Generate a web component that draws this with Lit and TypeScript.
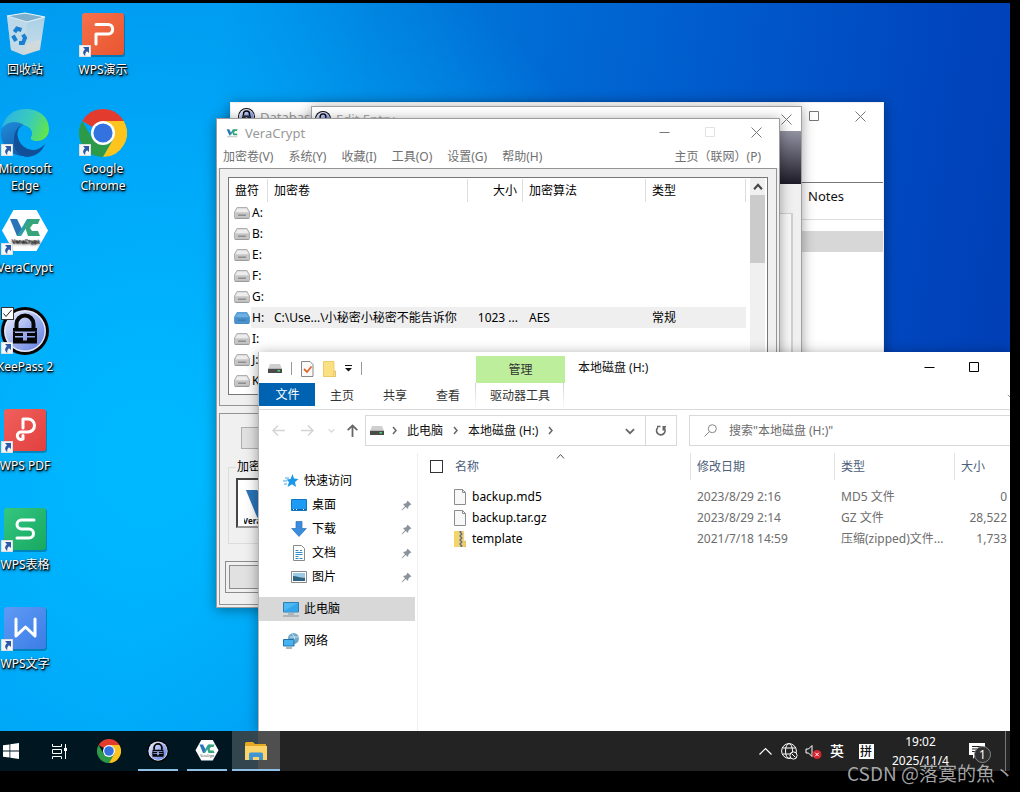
import { LitElement, html, css, svg, nothing } from "lit";
import { customElement, property } from "lit/decorators.js";
import { classMap } from "lit/directives/class-map.js";

const base = css`
  * { box-sizing: border-box; }
  button { font: inherit; color: inherit; background: none; border: 0; padding: 0; margin: 0; }
  a { color: inherit; text-decoration: none; }
  svg { display: block; flex: none; }
  table { border-collapse: collapse; table-layout: fixed; }
  th, td { padding: 0; font-weight: 400; text-align: left; white-space: nowrap; overflow: hidden; }
`;

/* ---------- icons ---------- */

const wpsTile = (id: string, from: string, to: string, glyph: unknown) => html`
  <svg width="48" height="48" viewBox="0 0 48 48">
    <defs><linearGradient id=${id} x1="0" y1="0" x2="1" y2="1"><stop offset="0" stop-color=${from}/><stop offset="1" stop-color=${to}/></linearGradient></defs>
    <rect x="3" y="4" width="43" height="43" rx="3" fill="#000" opacity=".25"/>
    <rect x="3" y="3" width="42" height="42" rx="3" fill="url(#${id})"/>
    <g fill="none" stroke="#fff" stroke-width="3" stroke-linecap="round" stroke-linejoin="round">${glyph}</g>
  </svg>`;

const chrome = (s: number) => html`
  <svg width=${s} height=${s} viewBox="0 0 48 48">
    <path d="M24 24 3.2 12A24 24 0 0 1 44.8 12L24 12Z" fill="#e33b2e"/>
    <path d="M3.2 12A24 24 0 0 0 24 48L34.4 30 24 24 13.6 30Z" fill="#2c9a48"/>
    <path d="M44.8 12A24 24 0 0 1 24 48L34.4 30 34 17 24 12Z" fill="#fcc41c"/>
    <circle cx="24" cy="24" r="12" fill="#fff"/>
    <circle cx="24" cy="24" r="9.6" fill="#3472e0"/>
  </svg>`;

const keepass = (s: number, id = "kp") => html`
  <svg width=${s} height=${s} viewBox="0 0 48 48">
    <defs><linearGradient id=${id} x1="0" y1="0" x2="1" y2="1"><stop offset="0" stop-color="#f4f6ff"/><stop offset=".5" stop-color="#9fb0ee"/><stop offset="1" stop-color="#5f7ddd"/></linearGradient></defs>
    <circle cx="24" cy="24" r="24" fill="#060606"/>
    <circle cx="24" cy="24" r="21" fill="#e4e9fb"/>
    <circle cx="24" cy="24" r="19.5" fill="url(#${id})"/>
    <path d="M15.5 21v-4a8.500 8.500 0 0 1 17 0v4" fill="none" stroke="#060606" stroke-width="4"/>
    <path d="M12 21h24v3.500H12zM12 26h10v3H12zM26 26h10v3H26zM12 30.500h10v3H12zM26 30.500h10v3H26zM12 33.500h24v3H12z" fill="#060606"/>
    <path d="M12 24.500h2v9h-2zM34 24.500h2v9h-2z" fill="#060606"/>
  </svg>`;

const vcMark = svg`
  <path d="M9 11h7l6 12-3 5h-3z" fill="#2a74b8"/>
  <path d="M16 28 26 11h5L20 28z" fill="#2b9fa5"/>
  <path d="M39 11H29l-5 8 3 9h12l-2-5h-6l-2-3 3-4h5z" fill="#36a579"/>`;

const veracrypt = (s: number) => html`
  <svg width=${s} height=${s} viewBox="0 0 48 48">
    <path d="M12.500 2h23L47 22.500 35.500 43h-23L1 22.500Z" fill="#fff"/>
    ${vcMark}
    <text x="24.500" y="35" text-anchor="middle" font-family="Open Sans, sans-serif" font-size="6" fill="#222">VeraCrypt</text>
  </svg>`;

const edge = html`
  <svg width="48" height="48" viewBox="0 0 48 48">
    <defs>
      <linearGradient id="e1" x1="0" y1=".3" x2="1" y2=".6"><stop offset="0" stop-color="#2cb3e4"/><stop offset=".55" stop-color="#3accba"/><stop offset="1" stop-color="#62e44a"/></linearGradient>
      <linearGradient id="e2" x1="0" y1="0" x2=".6" y2="1"><stop offset="0" stop-color="#1f8fdc"/><stop offset="1" stop-color="#1257a9"/></linearGradient>
    </defs>
    <path d="M1 19C4 6 13 0 25 0c14 0 23 9 23 20 0 8-6 12-12 12-5 0-7-2-6-4 3-4 0-11-8-12C13 15 5 17 1 19Z" fill="url(#e1)"/>
    <path d="M1 19c5-7 15-8 22-3-7 1-9 9-6 17 3 8 10 12 18 11C22 52 0 44 0 24c0-2 .3-3.500 1-5Z" fill="url(#e2)"/>
    <path d="M22 16c-7 3-7 12-2 19 6 7 16 9 24 0-3 8-10 13-19 13-8-2-13-8-12-17 0-8 3-13 9-15Z" fill="#114f99"/>
  </svg>`;

const recycle = html`
  <svg width="48" height="48" viewBox="0 0 48 48">
    <defs><linearGradient id="rb" x1="0" y1="0" x2="0" y2="1"><stop offset="0" stop-color="#a6cfe6"/><stop offset=".7" stop-color="#bfd9e8"/><stop offset="1" stop-color="#cfcfca"/></linearGradient></defs>
    <path d="M6 6 24 3l20 4-5 33-17 5-12-5Z" fill="url(#rb)"/>
    <path d="M6 6 24 3l20 4-18 5Z" fill="#7db0cd" stroke="#e6f2f8" stroke-width="1.200"/>
    <path d="m26 12-2 33-14-5L6 6Z" fill="#c2dbe9" opacity=".75"/>
    <path d="m24 45 1-11 15-5-2 11Z" fill="#dddcd7" opacity=".55"/>
    <g fill="none" stroke="#1a7fd0" stroke-width="4"><path d="m13.500 22 2.500-3.500 4.500 1.500M12 25.500l3 5.500M18 33h4l2-5-2-3.500"/></g>
  </svg>`;

const shortcut = html`
  <svg class="shortcut" width="12" height="12" viewBox="0 0 12 12">
    <rect width="12" height="12" fill="#f6f6f6" stroke="#c8c8c8"/>
    <path d="M4 2h6v6L8 6.300C6.500 7.500 6 9 6.300 11 3.500 9 3.500 6.500 6 4.300Z" fill="#2a5ba8"/>
  </svg>`;

const disk = (blue = false) => html`
  <svg width="16" height="12" viewBox="0 0 16 12">
    <path d="M3 .5h10L15.500 5v5.500a1 1 0 0 1-1 1h-13a1 1 0 0 1-1-1V5Z" fill=${blue ? "#5fa3d8" : "#dcdcdc"} stroke=${blue ? "#5b9fd4" : "#b0b0b0"}/>
    <path d="M1 5.500h14v5H1z" fill=${blue ? "#4a90cb" : "#c6c6c6"}/>
    <path d="M4 7.500h8v1.500H4z" fill=${blue ? "#3b7db6" : "#8f8f8f"}/>
    <path d="M1 11.200h14" stroke=${blue ? "#3b7db6" : "#8a8a8a"} stroke-width=".8"/>
    <path d="M3.500 2h9L14 5H2Z" fill=${blue ? "#6db1e4" : "#ededed"}/>
  </svg>`;

const darkDisk = html`
  <svg width="14" height="9" viewBox="0 0 14 9">
    <path d="M2 0h10l2 5H0Z" fill="#cfcfcf"/><path d="M0 4.800h14V9H0z" fill="#4a4a4a"/><path d="M9.500 6h2.500v1.500H9.500z" fill="#3fe06a"/>
  </svg>`;

type Mark = "min" | "max" | "close";
const mark = (k: Mark) => html`
  <svg width="11" height="11" viewBox="0 0 11 11" fill="none" stroke="currentColor">
    ${k === "min" ? svg`<path d="M.5 5.500h10"/>` : k === "max" ? svg`<path d="M.5.5h9v9h-9z"/>` : svg`<path d="m.5.5 10 10M10.500.5l-10 10"/>`}
  </svg>`;

const chev = (d: string, size = 9, w = 1.5) => html`
  <svg width=${size} height=${size} viewBox="0 0 9 9" fill="none" stroke="currentColor" stroke-width=${w}><path d=${d}/></svg>`;
const UP = "m1 6.500 3.500-4L8 6.500", DOWN = "m.8 2.800 3.700 3.700 3.700-3.700", RIGHT = "m3 1 3 3.500L3 8";

/* ---------- desktop shortcuts ---------- */

@customElement("desktop-icon")
export class DesktopIcon extends LitElement {
  @property() label = "";
  @property({ attribute: false }) icon: unknown = nothing;
  @property({ type: Boolean }) link = false;
  @property({ type: Boolean }) ticked = false;
  static styles = [base, css`
    :host { display: block; }
    .item { display: flex; flex-direction: column; align-items: center; width: 100%; gap: 3px; color: #fff; line-height: 17px; text-shadow: 0 1px 2px #000, 1px 1px 1px #000, 1px 2px 3px rgba(0, 0, 0, .6); }
    .art { position: relative; width: 48px; height: 48px; }
    .shortcut { position: absolute; left: 0; bottom: 1px; }
    .tick { position: absolute; left: 0; top: 0; width: 13px; height: 13px; background: #fff; border: 1px solid #333; }
    .check { position: absolute; left: 2px; top: 2px; pointer-events: none; }
    .label { max-width: 62px; text-align: center; }
  `];
  render() {
    return html`<button class="item">
      <span class="art">${this.icon}${this.link ? shortcut : nothing}
        ${this.ticked ? html`<span class="tick"></span><svg class="check" width="9" height="9" viewBox="0 0 9 9" fill="none" stroke="#222"><path d="m.5 4.500 2.500 3L8.500 1"/></svg>` : nothing}
      </span>
      <span class="label">${this.label}</span>
    </button>`;
  }
}

/* ---------- KeePass windows ---------- */

@customElement("keepass-window")
export class KeepassWindow extends LitElement {
  static styles = [base, css`
    :host { display: block; background: #fff; border: 1px solid #f0f0f0; color: #9a9a9a; font-size: 13px; }
    .bar { display: flex; align-items: center; height: 27px; padding-left: 7px; }
    .name { flex: 1; padding-left: 5px; }
    .ctl { width: 46px; height: 27px; display: grid; place-items: center; color: #777; }
    .tools { height: 53px; border-bottom: 1px solid #777; }
    .entries { width: 100%; color: #111; }
    th { height: 36px; padding: 0 0 9px 577px; border-bottom: 1px solid #ddd; }
    td { height: 21px; background: #d7d7d7; }
    .gap td { height: 12px; background: none; }
  `];
  render() {
    return html`
      <div class="bar">${keepass(17, "kp1")}<span class="name">Database</span>
        <button class="ctl" aria-label="最大化">${mark("max")}</button><button class="ctl" aria-label="关闭">${mark("close")}</button></div>
      <div class="tools"></div>
      <table class="entries"><thead><tr><th>Notes</th></tr></thead>
        <tbody><tr class="gap"><td></td></tr><tr><td></td></tr></tbody></table>`;
  }
}

@customElement("entry-dialog")
export class EntryDialog extends LitElement {
  static styles = [base, css`
    :host { display: flex; flex-direction: column; background: #f0f0f0; border: 1px solid #a0a0a0; color: #aaa; font-size: 13px; }
    .bar { display: flex; align-items: center; height: 24px; padding: 0 9px 0 3px; gap: 5px; background: #fff; }
    .name { flex: 1; }
    .ctl { color: #777; }
    .banner { height: 53px; background: linear-gradient(#9392a2, #1d1b27); }
    .page { flex: 1; margin: 29px 8px 8px; background: #fafafa; border: 1px solid #d0d0d0; border-right-width: 2px; }
  `];
  render() {
    return html`<div class="bar">${keepass(16, "kp2")}<span class="name">Edit Entry</span><button class="ctl" aria-label="关闭">${mark("close")}</button></div>
      <div class="banner"></div><div class="page"></div>`;
  }
}

/* ---------- VeraCrypt ---------- */

const volumes = ["A:", "B:", "E:", "F:", "G:", "H:", "I:", "J:", "K:"].map((d) =>
  d === "H:" ? [d, "C:\\Use...\\小秘密小秘密不能告诉你", "1023 ...", "AES", "常规"] : [d, "", "", "", ""]);

@customElement("veracrypt-window")
export class VeracryptWindow extends LitElement {
  static styles = [base, css`
    :host { display: flex; flex-direction: column; background: #f0f0f0; border: 1px solid #9c9c9c; color: #000; }
    .bar { display: flex; align-items: center; height: 27px; background: #fff; padding-left: 9px; color: #999; font-size: 13px; }
    .name { flex: 1; padding-left: 7px; }
    .ctl { width: 46px; height: 27px; display: grid; place-items: center; color: #777; }
    .ctl:disabled { color: #e2e2e2; }
    .menu { display: flex; height: 22px; align-items: center; gap: 15px; padding: 0 18px 0 6px; background: #fff; color: #707070; }
    .home { margin-left: auto; }
    .panel { margin: 0 2px 7px; border: 1px solid #949494; }
    .lists { padding: 8px 8px 10px; }
    .box { display: flex; justify-content: space-between; height: 218px; background: #fff; border: 1px solid #777; padding-right: 2px; overflow: hidden; }
    table { align-self: flex-start; }
    th { height: 24px; }
    th span { display: block; height: 23px; line-height: 23px; border-right: 1px solid #ddd; padding-left: 6px; }
    td { height: 21px; line-height: 20px; padding-left: 6px; }
    th.num span, td.num { text-align: right; padding-right: 5px; }
    .drive { display: flex; align-items: center; gap: 2px; margin-left: -1px; }
    .on td { background: #efefef; }
    .on td:first-child { background: linear-gradient(90deg, #fff 22px, #efefef 22px); }
    .scroll { width: 15px; background: #f0f0f0; color: #444; }
    .scroll button { display: grid; place-items: center; width: 15px; height: 17px; }
    .thumb { height: 68px; background: #cbcbcb; }
    .actions { flex: 1; margin-bottom: 2px; }
    .grey { display: block; background: #e1e1e1; border: 1px solid #adadad; width: 110px; height: 22px; margin: 13px 0 10px 21px; }
    fieldset { height: 85px; margin: 0 8px; padding: 0 7px; border: 1px solid #dcdcdc; }
    legend { line-height: 16px; padding: 0 1px; }
    .logo { width: 70px; height: 50px; margin-top: 3px; background: #fff; border: 2px inset #999; padding: 10px 6px; }
    .default { margin: 17px 5px 0; border: 1px solid #8c8c8c; padding: 3px; height: 32px; }
    .default button { width: 120px; height: 24px; background: #e1e1e1; border: 1px solid #8c8c8c; }
  `];
  render() {
    return html`
      <div class="bar">
        <svg width="12" height="12" viewBox="7 9 33 25">${vcMark}<path d="M10 31h28v2H10z" fill="#aaa"/></svg>
        <span class="name">VeraCrypt</span>
        <button class="ctl" aria-label="最小化">${mark("min")}</button><button class="ctl" disabled aria-label="最大化">${mark("max")}</button><button class="ctl" aria-label="关闭">${mark("close")}</button>
      </div>
      <div class="menu">${["加密卷(V)", "系统(Y)", "收藏(I)", "工具(O)", "设置(G)", "帮助(H)"].map((m) => html`<button>${m}</button>`)}
        <button class="home">主页（联网）(P)</button></div>
      <div class="panel lists"><div class="box">
        <table>
          <colgroup><col width="39"><col width="200"><col width="55"><col width="123"><col width="100"></colgroup>
          <thead><tr>${["盘符", "加密卷", "大小", "加密算法", "类型"].map((h, i) => html`<th class=${i === 2 ? "num" : ""}><span>${h}</span></th>`)}</tr></thead>
          <tbody>${volumes.map((v) => html`<tr class=${classMap({ on: !!v[1] })}>
            <td><span class="drive">${disk(!!v[1])}${v[0]}</span></td><td>${v[1]}</td><td class="num">${v[2]}</td><td>${v[3]}</td><td>${v[4]}</td></tr>`)}</tbody>
        </table>
        <div class="scroll"><button aria-label="向上滚动">${chev(UP, 10, 1.8)}</button><div class="thumb"></div></div>
      </div></div>
      <div class="panel actions">
        <button class="grey" aria-label="创建加密卷"></button>
        <fieldset><legend>加密卷</legend>
          <div class="logo"><svg width="54" height="34" viewBox="8 11 33 21">${vcMark}<text x="7" y="32" font-family="Open Sans, sans-serif" font-size="5" font-weight="700" fill="#111">VeraCrypt</text></svg></div>
        </fieldset>
        <div class="default"><button aria-label="加载"></button></div>
      </div>`;
  }
}

/* ---------- File Explorer ---------- */

const files = [
  ["backup.md5", "2023/8/29 2:16", "MD5 文件", "0"],
  ["backup.tar.gz", "2023/8/29 2:14", "GZ 文件", "28,522"],
  ["template", "2021/7/18 14:59", "压缩(zipped)文件...", "1,733"],
];

const pageIcon = html`<svg width="12" height="16" viewBox="0 0 12 16"><path d="M.5.500h8l3 3v12H.5Z" fill="#f8f8f8" stroke="#8c8c8c"/><path d="M8.500.5v3h3" fill="none" stroke="#8c8c8c"/></svg>`;
const zipIcon = html`<svg width="12" height="16" viewBox="0 0 13 16" preserveAspectRatio="none"><path d="M0 0h11v10h2v6H0Z" fill="#f5d567"/><path d="M11 10h1.500v5.500H11z" fill="#fbe9a0" stroke="#d9ad35" stroke-width=".6"/><path d="M5.500 0h4v16h-4z" fill="#d8cfae"/><path d="M6 1h2M7 3h2M6 5h2M7 7h2M6 9h2M7 11h2M6 13h2M7 15h2" stroke="#4c4c4c" stroke-width="1.300"/></svg>`;
const pin = html`<svg class="pin" width="11" height="11" viewBox="0 0 11 11"><path d="M6.500.5 10.500 4.500 9 5 7.500 6.500 7 9 4.800 7 1 10.500.5 10 4 6.200 2 4l2.500-.5L6 2Z" fill="#8b9299"/></svg>`;
const sideIcons: Record<string, unknown> = {
  star: html`<svg width="16" height="16" viewBox="0 0 16 16"><path d="m9.500 1 1.500 4.500 4.500.5-3.500 3 1 5-4-2.800L4.500 14 6 9 3.500 6.500 7.500 6Z" fill="#1a96ea"/><path d="M2 5h4M0 8h4M1 11h3" stroke="#3aa8f0" stroke-width="1.200"/></svg>`,
  desk: html`<svg width="16" height="16" viewBox="0 0 16 16"><path d="M.5 2.500h15v11H.5z" fill="#1c9bf5" stroke="#1276c4"/><path d="M1 12.500h14" stroke="#0b5ea6"/><path d="M2 12.500h1M5 12.500h1M12 12.500h1" stroke="#fff"/></svg>`,
  down: html`<svg width="16" height="16" viewBox="0 0 16 16"><path d="M5 .5h6v7h4.300L8 15.500.7 7.500H5Z" fill="#3a8ddc" stroke="#2a73bd" stroke-width=".7"/></svg>`,
  doc: html`<svg width="16" height="16" viewBox="0 0 16 16"><path d="M2.500.5h8l3 3v12h-11Z" fill="#fff" stroke="#8a8a8a"/><path d="M4.500 5.500h3M4.500 7.500h7M4.500 9.500h7M4.500 13.500h3M8.500 13.500h3M4.500 11.500h3M9 5.500h2" stroke="#2d8cc8"/></svg>`,
  pic: html`<svg width="16" height="16" viewBox="0 0 16 16"><path d="M.5 2.500h15v11H.5z" fill="#fff" stroke="#8a8a8a"/><path d="M2 4h12v4H2z" fill="#9ccbe8"/><path d="M2 7c4 0 6 2 12 1.500V12H2z" fill="#2f6483"/></svg>`,
  pc: html`<svg width="16" height="16" viewBox="0 0 16 16"><path d="M.5 1.500h15v9.500H.5z" fill="#4db8f5" stroke="#2c7fb5"/><path d="M1 10 15 2v8.500H1Z" fill="#35a5ea"/><path d="M5 13h6M0 15h16" stroke="#8494a0"/></svg>`,
  net: html`<svg width="16" height="16" viewBox="0 0 16 16"><circle cx="10.500" cy="5.500" r="5.500" fill="#6fa9c9"/><path d="M9 1c3 2 3 6 1 9M7 4h9" stroke="#c7e3ef" fill="none"/><path d="M.5 6.500h10.500v6.500H.5z" fill="#45b3f2" stroke="#2271a8"/><path d="M3 15h6" stroke="#56707f"/></svg>`,
};

@customElement("explorer-window")
export class ExplorerWindow extends LitElement {
  static styles = [base, css`
    :host { display: flex; flex-direction: column; overflow: hidden; background: #fff; color: #111; border-left: 1px solid #b5b5b5; }
    .bar { display: flex; height: 31px; }
    .quick { display: flex; align-items: center; width: 217px; padding: 2px 0 0 9px; }
    .quick > * { margin-right: 9px; }
    .sep { width: 1px; height: 13px; background: #999; }
    .manage { width: 89px; height: 27px; margin-top: 4px; background: #bdee9c; text-align: center; line-height: 27px; color: #333; }
    .name { flex: 1; padding-left: 13px; line-height: 32px; }
    .ctl { width: 45px; height: 31px; display: grid; place-items: center; color: #000; }
    .controls { display: flex; margin-right: -32px; }
    .tabs { display: flex; height: 27px; border-bottom: 1px solid #dadada; color: #333; }
    .tabs button { width: 53px; height: 26px; padding-left: 1px; }
    .tabs .file { width: 56px; height: 23px; background: #0063b1; color: #fff; }
    .tabs .tool { width: 89px; margin-left: 1px; border: solid; border-width: 0 1px; border-image: linear-gradient(#d0d0d0, #fff) 1; }
    .tabs .fold { width: 9px; margin: 0 -5px 0 auto; color: #999; }
    .path { display: flex; padding: 5px 0 7px; }
    .moves { display: flex; width: 106px; align-items: center; padding-left: 13px; gap: 16px; color: #d4d4d4; }
    .moves .up { color: #666; margin-left: -4px; }
    .moves .recent { margin-left: -2px; }
    .address { display: flex; align-items: center; width: 312px; height: 31px; border: 1px solid #d9d9d9; color: #666; padding-left: 4px; }
    .address a { color: #111; margin: 0 8px; }
    .first { margin-left: 6px; }
    .drop { margin-left: auto; width: 30px; display: grid; place-items: center; }
    .fresh { width: 31px; height: 29px; border-left: 1px solid #d9d9d9; display: grid; place-items: center; }
    .search { display: flex; flex: 1; align-items: center; gap: 12px; margin-left: 12px; padding-left: 14px; border: 1px solid #d9d9d9; border-right: 0; color: #888; }
    .search input { flex: 1; min-width: 0; border: 0; outline: 0; padding: 0; font: inherit; background: none; }
    .search input::placeholder { color: #6d6d6d; opacity: 1; }
    .body { display: flex; flex: 1; min-height: 0; }
    nav { width: 159px; padding-top: 16px; border-right: 1px solid #f0f0f0; color: #000; }
    nav a { display: flex; align-items: center; gap: 5px; height: 24px; margin-right: 2px; padding-left: 24px; }
    nav .sub { padding-left: 32px; }
    nav .root { margin-top: 8px; }
    nav .on { background: #d8d8d8; }
    .pin { margin-left: auto; margin-right: 3px; }
    main { flex: 1; min-width: 0; padding-left: 12px; }
    table { width: 100%; color: #6d6d6d; }
    th { color: #4c607a; position: relative; }
    .head { display: flex; align-items: center; height: 27px; margin-bottom: 6px; padding-left: 6px; border-right: 1px solid #e2e2e2; }
    .firsth .head { padding-left: 0; gap: 12px; }
    th:last-child .head { border: 0; }
    .sort { position: absolute; left: 126px; top: -1px; color: #555; }
    input[type="checkbox"] { appearance: none; width: 13px; height: 13px; margin: 0; border: 1px solid #333; background: #fff; }
    td { height: 21px; padding-left: 6px; line-height: 21px; }
    td:first-child { padding-left: 24px; color: #000; }
    .file-name { display: flex; align-items: center; gap: 6px; }
    td:last-child { text-align: right; padding-right: 3px; }
  `];
  private item(icon: string, text: string, cls = "", pinned = false) {
    return html`<a href="#" class=${cls}>${sideIcons[icon]}<span>${text}</span>${pinned ? pin : nothing}</a>`;
  }
  render() {
    return html`
      <div class="bar">
        <div class="quick">${darkDisk}<span class="sep"></span>
          <svg width="13" height="16" viewBox="0 0 13 16"><path d="M.5.5h8.500l3 3v12H.5Z" fill="#fafafa" stroke="#888"/><path d="m3 8 3 3 4.500-5.500" fill="none" stroke="#e0662c" stroke-width="1.800"/></svg>
          <svg width="13" height="16" viewBox="0 0 13 16"><path d="M0 .5h11V10h2v6H0Z" fill="#fbdf83"/><path d="M.5.5h10.500V10M.5.5v15H11" fill="none" stroke="#e9c55c" stroke-width=".8"/><path d="M11 10h1.500v5.500H11z" fill="#fff0b5" stroke="#ddb548" stroke-width=".7"/></svg>
          <svg width="7" height="7" viewBox="0 0 7 7"><path d="M0 .5h7" stroke="#111"/><path d="M0 3h7L3.500 6.500Z" fill="#111"/></svg>
          <span class="sep"></span></div>
        <div class="manage">管理</div><div class="name">本地磁盘 (H:)</div>
        <div class="controls"><button class="ctl" aria-label="最小化">${mark("min")}</button><button class="ctl" aria-label="最大化">${mark("max")}</button><button class="ctl" aria-label="关闭">${mark("close")}</button></div>
      </div>
      <div class="tabs"><button class="file">文件</button><button>主页</button><button>共享</button><button>查看</button><button class="tool">驱动器工具</button>
        <button class="fold" aria-label="展开功能区">${chev(DOWN, 9, 1)}</button></div>
      <div class="path">
        <div class="moves">
          <button aria-label="后退"><svg width="13" height="11" viewBox="0 0 13 11" fill="none" stroke="currentColor" stroke-width="1.500"><path d="M13 5.500H1M6 .5l-5 5 5 5"/></svg></button>
          <button aria-label="前进"><svg width="13" height="11" viewBox="0 0 13 11" fill="none" stroke="currentColor" stroke-width="1.500"><path d="M0 5.500h12M7 .5l5 5-5 5"/></svg></button>
          <button class="recent" aria-label="最近">${chev(DOWN, 7)}</button>
          <button class="up" aria-label="上移"><svg width="11" height="13" viewBox="0 0 11 13" fill="none" stroke="currentColor" stroke-width="1.800"><path d="M5.500 13V1.500M.7 6.200l4.800-4.800 4.800 4.800"/></svg></button>
        </div>
        <div class="address">${darkDisk}<span class="first">${chev(RIGHT)}</span><a href="#">此电脑</a>${chev(RIGHT)}<a href="#">本地磁盘 (H:)</a>${chev(RIGHT)}
          <button class="drop" aria-label="历史">${chev(DOWN, 10, 1.6)}</button>
          <button class="fresh" aria-label="刷新"><svg width="12" height="13" viewBox="0 0 12 13" fill="none" stroke="#666" stroke-width="1.600"><path d="M2.800 3.500A4.300 4.300 0 1 0 8.500 3.200M2 2.500h3.500M8.300 6.500V2.800H11"/></svg></button></div>
        <label class="search"><svg width="13" height="13" viewBox="0 0 13 13" fill="none" stroke="#888"><circle cx="8.300" cy="4.700" r="4"/><path d="M5.400 7.600.5 12.500"/></svg>
          <input type="text" aria-label="搜索" placeholder='搜索"本地磁盘 (H:)"'></label>
      </div>
      <div class="body">
        <nav>${this.item("star", "快速访问")}${this.item("desk", "桌面", "sub", true)}${this.item("down", "下载", "sub", true)}${this.item("doc", "文档", "sub", true)}${this.item("pic", "图片", "sub", true)}
          ${this.item("pc", "此电脑", "root on")}${this.item("net", "网络", "root")}</nav>
        <main><table>
          <colgroup><col width="261"><col width="144"><col width="120"><col></colgroup>
          <thead><tr><th class="firsth"><div class="head"><input type="checkbox" aria-label="全选">名称</div><span class="sort">${chev(UP, 9, 1)}</span></th>
            ${["修改日期", "类型", "大小"].map((h) => html`<th><div class="head">${h}</div></th>`)}</tr></thead>
          <tbody>${files.map((f, i) => html`<tr><td><span class="file-name">${i === 2 ? zipIcon : pageIcon}${f[0]}</span></td><td>${f[1]}</td><td>${f[2]}</td><td>${f[3]}</td></tr>`)}</tbody>
        </table></main>
      </div>`;
  }
}

/* ---------- taskbar ---------- */

@customElement("task-bar")
export class TaskBar extends LitElement {
  static styles = [base, css`
    :host { display: flex; height: 40px; background: linear-gradient(90deg, #001722 258px, #232323 258px); color: #fff; }
    .apps { display: flex; gap: 9px; margin-left: -9px; flex: 1; }
    .app { width: 40px; display: grid; place-items: center; border-bottom: 2px solid transparent; border-top: 2px solid transparent; }
    .open { border-bottom-color: #8ebfe6; }
    .active { width: 48px; margin-left: -4px; background: rgba(255, 255, 255, .2); }
    .tray { display: flex; align-items: center; font-size: 14px; }
    .tray > * { width: 24px; display: grid; place-items: center; }
    .tray .lang { font-weight: 500; }
    .tray .wide { width: 34px; }
    .pinyin { width: 15px; height: 15px; line-height: 15px; background: #fff; color: #111; font-size: 12px; font-weight: 500; }
    .tray .clock { width: 75px; font-size: 12px; line-height: 19px; }
    .tray .note { position: relative; width: 38px; padding-top: 1px; }
    .count { position: absolute; left: 16px; top: 4px; width: 17px; height: 17px; border: 1px solid #888; border-radius: 50%; background: #303030; font-size: 12px; line-height: 15px; text-align: center; }
    .tray .peek { width: 5px; height: 40px; border-left: 1px solid #777; margin-left: 9px; }
  `];
  render() {
    return html`<div class="apps">
        <button class="app" aria-label="开始"><svg width="16" height="16" viewBox="0 0 16 16" fill="#fff"><path d="M0 2.300 6.500 1.400v6.200H0ZM7.300 1.300 16 0v7.600H7.300ZM0 8.400h6.500v6.200L0 13.700ZM7.300 8.400H16V16l-8.700-1.300Z"/></svg></button>
        <button class="app" aria-label="任务视图"><svg width="19" height="15" viewBox="0 0 19 15" fill="none" stroke="#fff"><path d="M1.500 0v2.500h9V0M1.500 5.500h9v4h-9zM1.500 15v-2.500h9V15M14.500 0v15"/><path d="M13 4h3v3h-3z" fill="#fff" stroke="none"/></svg></button>
        <button class="app" aria-label="Google Chrome">${chrome(24)}</button>
        <button class="app open" aria-label="KeePass">${keepass(22)}</button>
        <button class="app open" aria-label="VeraCrypt">${veracrypt(24)}</button>
        <button class="app open active" aria-label="文件资源管理器"><svg width="22" height="19" viewBox="0 0 22 19"><path d="M0 1.500A1.500 1.500 0 0 1 1.500 0H8l2 2h11v4H0Z" fill="#e5a823"/><path d="M0 4h22v14H0Z" fill="#fbd56c"/><path d="M4 18v-6a1.500 1.500 0 0 1 1.500-1.500h11A1.500 1.500 0 0 1 18 12v6h-4v-3H8v3Z" fill="#3f95d2"/></svg></button>
      </div>
      <div class="tray">
        <button aria-label="显示隐藏的图标"><svg width="13" height="8" viewBox="0 0 13 8" fill="none" stroke="#fff" stroke-width="1.200"><path d="M.5 7.500l6-6 6 6"/></svg></button>
        <button aria-label="网络"><svg width="17" height="17" viewBox="0 0 17 17" fill="none" stroke="#fff"><circle cx="8" cy="8" r="7.400"/><ellipse cx="8" cy="8" rx="3.500" ry="7.400"/><path d="M1.500 5h13M1.500 11h13"/><circle cx="12.500" cy="12.500" r="3.600" fill="#232323"/><path d="m10.500 10.500 4 4"/></svg></button>
        <button aria-label="音量"><svg width="17" height="15" viewBox="0 0 17 15" fill="none" stroke="#fff"><path d="M1 5h2.500L7 1.500v11L3.500 9H1Z"/><circle cx="12" cy="10.500" r="4.500" fill="#d8232f" stroke="none"/><path d="m10.200 8.700 3.600 3.600M13.800 8.700l-3.600 3.600"/></svg></button>
        <button class="lang">英</button>
        <button class="wide"><span class="pinyin">拼</span></button>
        <button class="clock"><span>19:02</span><span>2025/11/4</span></button>
        <button class="note" aria-label="通知"><svg width="16" height="17" viewBox="0 0 16 17"><path d="M0 0h16v12H7l-3 4v-4H0Z" fill="#fff"/><path d="M3 3.500h10M3 6h10M3 8.500h7" stroke="#232323"/></svg><span class="count">1</span></button>
        <span class="peek"></span>
      </div>`;
  }
}

/* ---------- desktop ---------- */

@customElement("app-root")
export class AppRoot extends LitElement {
  static styles = [base, css`
    :host { display: flex; flex-direction: column; position: relative; height: 100vh; box-sizing: border-box; padding: 3px 10px 21px 0; overflow: hidden; background: #000; font: 12px/16px "Noto Sans", "Noto Sans CJK SC", sans-serif; }
    .desktop { position: relative; flex: 1; min-height: 0; overflow: hidden;
      background: radial-gradient(ellipse 520px 600px at 150px 460px, rgba(0, 184, 255, 1) 10%, rgba(0, 178, 255, .75) 45%, rgba(0, 170, 250, 0)), linear-gradient(98deg, #0092ea 0%, #0094ec 20%, #007bdb 34%, #0062d0 58%, #0046be 85%, #003bb0 100%); }
    .icons { display: grid; grid-template-rows: repeat(7, 99px); grid-auto-columns: 78px; grid-auto-flow: column; margin: 7px 0 0 -14px; }
    .win { position: absolute; box-shadow: 0 2px 12px rgba(0, 0, 0, .38); }
    .keepass { left: 230px; top: 99px; width: 654px; height: 460px; }
    .entry { left: 311px; top: 103px; width: 491px; height: 450px; }
    .vera { left: 216px; top: 115px; width: 564px; height: 490px; }
    .explorer { left: 258px; top: 349px; right: 0; bottom: 0; }
    .mark { position: absolute; right: 6px; bottom: 5px; font-family: "Noto Sans CJK SC", sans-serif; font-size: 19px; line-height: 28px; color: rgba(215, 215, 215, .75); white-space: nowrap; pointer-events: none; }
  `];
  private icons = [
    { t: "回收站", i: recycle, bare: true }, { t: "Microsoft Edge", i: edge }, { t: "VeraCrypt", i: veracrypt(48) }, { t: "KeePass 2", i: keepass(48), tick: true },
    { t: "WPS PDF", i: wpsTile("w1", "#f0605c", "#e2403f", svg`<path d="M22 22V13h5a6.500 6.500 0 0 1 0 13h-6a3.800 3.800 0 1 0 1 7M22 33v-3.500"/>`) },
    { t: "WPS表格", i: wpsTile("w2", "#34c77f", "#17a862", svg`<path d="M33 15H20.500a4.500 4.500 0 0 0 0 9h7.500a4.500 4.500 0 0 1 0 9H16"/>`) },
    { t: "WPS文字", i: wpsTile("w3", "#5f9af5", "#3b7de6", svg`<path d="M15 15v17l9.500-9L34 32V15"/>`) },
    { t: "WPS演示", i: wpsTile("w4", "#f5714c", "#e8552f", svg`<path d="M17 14.500h12.500a4.800 4.800 0 0 1 0 9.500H17v10"/>`) },
    { t: "Google Chrome", i: chrome(48) },
  ];
  render() {
    return html`
      <div class="desktop">
        <div class="icons">${this.icons.map((d) => html`<desktop-icon .label=${d.t} .icon=${d.i} ?link=${!d.bare} ?ticked=${!!d.tick}></desktop-icon>`)}</div>
        <keepass-window class="win keepass"></keepass-window>
        <entry-dialog class="win entry"></entry-dialog>
        <veracrypt-window class="win vera"></veracrypt-window>
        <explorer-window class="win explorer"></explorer-window>
      </div>
      <task-bar></task-bar>
      <div class="mark">CSDN @落寞的魚丶</div>`;
  }
}
